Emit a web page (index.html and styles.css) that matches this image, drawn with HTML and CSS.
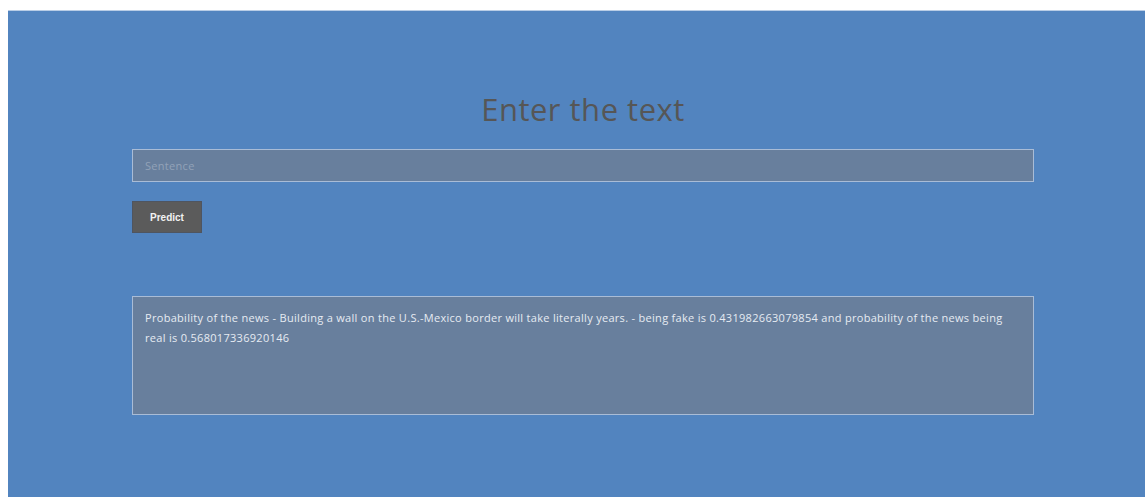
FILE: index.html
```html
<!DOCTYPE html>
<html lang="en">
<head>
<meta charset="utf-8">
<title>Fake News Detector</title>
<link rel="stylesheet" href="styles.css">
</head>
<body>
<main class="panel">
  <h1 class="title">Enter the text</h1>
  <form class="form">
    <input class="sentence" type="text" placeholder="Sentence">
    <button class="predict" type="button">Predict</button>
  </form>
  <div class="result">Probability of the news - Building a wall on the U.S.-Mexico border will take literally years. - being fake is 0.431982663079854 and probability of the news being real is 0.568017336920146</div>
</main>
</body>
</html>
```
FILE: styles.css
```css
html, body {
  margin: 0;
  background: #ffffff;
}

body {
  padding: 10px 0 0 8px;
  font-family: "Open Sans", Lato, sans-serif;
}

.panel {
  box-sizing: border-box;
  height: calc(100vh - 10px);
  background: #5284bf;
  border-top: 1px solid #b9cde6;
  padding: 78px 111px 0 124px;
  display: flex;
  flex-direction: column;
}

.title {
  margin: 0;
  text-align: center;
  font-size: 31px;
  font-weight: 500;
  letter-spacing: 0.5px;
  color: #565656;
  line-height: 40px;
}

.form {
  display: flex;
  flex-direction: column;
  align-items: flex-start;
  gap: 19px;
  margin-top: 20px;
}

.sentence {
  box-sizing: border-box;
  width: 100%;
  height: 33px;
  margin: 0;
  padding: 0 12px;
  background: #687f9d;
  border: 1px solid #a9bcd6;
  border-radius: 0;
  font-family: inherit;
  font-size: 11px;
  letter-spacing: 0.3px;
  color: #e8ecf2;
  outline: none;
}

.sentence::placeholder {
  color: #92a2b8;
}

.predict {
  box-sizing: border-box;
  width: 70px;
  height: 32px;
  margin: 0;
  background: #5b5b5b;
  border: 1px solid #4f5560;
  border-radius: 0;
  color: #f2f2f2;
  font-family: "Liberation Sans", Arial, sans-serif;
  font-weight: 700;
  font-size: 10px;
}

.result {
  box-sizing: border-box;
  margin-top: 63px;
  width: 100%;
  height: 119px;
  padding: 11px 12px;
  background: #687f9d;
  border: 1px solid #a9bcd6;
  color: #e6ebf2;
  font-size: 11px;
  letter-spacing: 0.3px;
  line-height: 20px;
}
```
